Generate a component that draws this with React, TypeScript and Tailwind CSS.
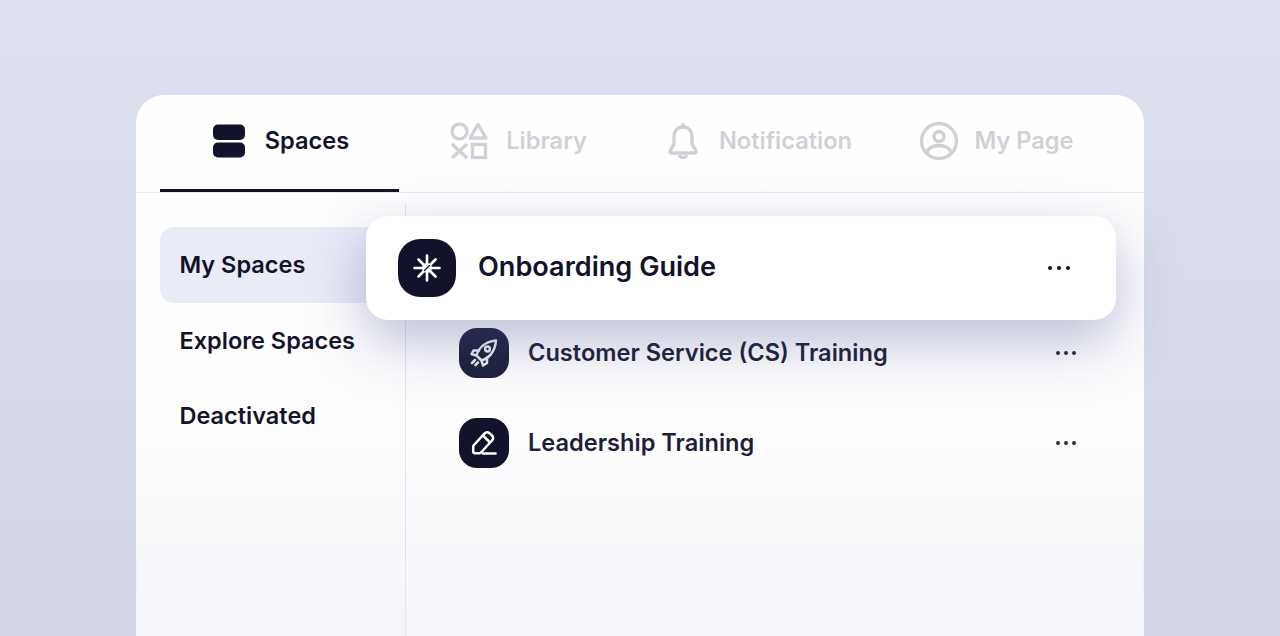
const font = { fontFamily: "Inter, 'Liberation Sans', sans-serif" };

function SpacesIcon() {
  return (
    <svg width="32" height="34" viewBox="0 0 32 34" fill="#12132b">
      <rect x="0" y="0.5" width="32" height="15.5" rx="5" />
      <rect x="0" y="18.5" width="32" height="15" rx="5" />
    </svg>
  );
}
function LibraryIcon() {
  return (
    <svg width="38" height="38" viewBox="0 0 38 38" fill="none" stroke="#d0d1d6" strokeWidth="3.4">
      <circle cx="9.5" cy="9.5" r="7.5" />
      <path d="M28 2.5 L36 16 H20 Z" strokeLinejoin="round" />
      <path d="M2 22 L17 36 M17 22 L2 36" />
      <rect x="22.5" y="22.5" width="13" height="13" />
    </svg>
  );
}
function BellIcon() {
  return (
    <svg width="30" height="36" viewBox="0 0 30 36" fill="none" stroke="#d0d1d6" strokeWidth="3.4" strokeLinejoin="round" strokeLinecap="round">
      <path d="M15 4 C8.5 4 6 9 6 14 V20 C6 24 2 25 2 28.5 C2 29.5 3 30 4 30 H26 C27 30 28 29.5 28 28.5 C28 25 24 24 24 20 V14 C24 9 21.5 4 15 4 Z" />
      <path d="M15 1.5 V4" />
      <path d="M12 33.5 C13.5 35 16.5 35 18 33.5" />
    </svg>
  );
}
function UserIcon() {
  return (
    <svg width="40" height="40" viewBox="0 0 40 40" fill="none" stroke="#d0d1d6" strokeWidth="3.4">
      <circle cx="20" cy="20" r="17.5" />
      <circle cx="20" cy="15.5" r="5" />
      <path d="M7.5 32 C9.5 26.5 14 24.5 20 24.5 C26 24.5 30.5 26.5 32.5 32" />
    </svg>
  );
}
function StarIcon() {
  return (
    <svg width="28" height="28" viewBox="0 0 28 28" fill="none" stroke="#fff" strokeWidth="2.6" strokeLinecap="round">
      <path d="M14 1.5 V26.5 M1.5 14 H26.5 M5.5 5.5 L22.5 22.5 M22.5 5.5 L5.5 22.5" />
      <circle cx="14" cy="14" r="5" fill="#fff" stroke="none" />
      <path d="M11.5 16.5 L16.5 11.5" stroke="#12132b" strokeWidth="1.3" />
    </svg>
  );
}
function RocketIcon() {
  return (
    <svg width="30" height="30" viewBox="0 0 30 30" fill="none" stroke="#eceef5" strokeWidth="2.5" strokeLinecap="round" strokeLinejoin="round">
      <path d="M10 20 L7.5 17.5 C9 12 14 4 27 2.5 C26 15 18.5 21 12.5 22.5 Z" />
      <circle cx="18.5" cy="11" r="2.4" />
      <path d="M10 12.5 L4.5 12.5 L2.5 16 L7.5 17.5" />
      <path d="M18 19.5 L18 25 L14 27.5 L12.5 22.5" />
      <path d="M6 22 L3 25 M9 24.5 L6.5 27" />
    </svg>
  );
}
function PencilIcon() {
  return (
    <svg width="26" height="26" viewBox="0 0 26 26" fill="none" stroke="#fff" strokeWidth="2.5" strokeLinecap="round" strokeLinejoin="round">
      <path d="M2.5 15.5 L13.5 3.5 C15 2 17 2 18.5 3.2 L21 5.5 C22.5 7 22.5 9 21 10.5 L10 22.5 C9.5 23 9 23.2 8.5 23.2 H4 C3 23.2 2.2 22.5 2.2 21.5 V17 C2.2 16.4 2.2 16 2.5 15.5 Z" />
      <path d="M12 5.5 L19 12.5" />
      <path d="M12 23.5 H24.5" />
    </svg>
  );
}

function Dots({ big }: { big?: boolean }) {
  return (
    <div className={big ? "flex gap-[5px]" : "flex gap-[4px]"}>
      {[0, 1, 2].map((i) => (
        <span key={i} className={big ? "w-1 h-1 rounded-full bg-[#12132b]" : "w-1 h-1 rounded-full bg-[#2a2b44]"} />
      ))}
    </div>
  );
}

function Tab({ icon, label, active, inset }: { icon: React.ReactNode; label: string; active?: boolean; inset: string }) {
  return (
    <div className={`flex items-center justify-center pb-[2px] border-b-[3px] h-full ${inset} ${active ? "border-[#12132b]" : "border-transparent"}`}>
      {icon}
      <span className={active ? "text-[23.6px] font-semibold text-[#12132b]" : "text-[23.6px] font-semibold text-[#d0d1d6]"}>{label}</span>
    </div>
  );
}

function Row({ icon, label, bg }: { icon: React.ReactNode; label: string; bg: string }) {
  return (
    <div className="h-[90px] flex items-center">
      <div className={`w-[50px] h-[50px] rounded-[18px] flex items-center justify-center ${bg}`}>{icon}</div>
      <span className="ml-[19px] text-[23.6px] font-semibold text-[#1d1e38] flex-1">{label}</span>
      <div className="mr-[68px]"><Dots /></div>
    </div>
  );
}

export default function App() {
  return (
    <div className="h-[636px] overflow-hidden bg-gradient-to-b from-[#dee1ef] to-[#d2d6e6] pt-[95px] px-[136px]" style={font}>
      <div className="relative h-[541px] rounded-t-[28px] bg-gradient-to-b from-white via-[#fdfdfe] via-65% to-[#f4f5f9] flex flex-col">
        <div className="h-[98px] border-b border-[#e9eaef] pl-[24px] pr-[28px] grid grid-cols-4 shrink-0">
          <Tab active inset="gap-[20px] pl-[3px]" icon={<SpacesIcon />} label="Spaces" />
          <Tab inset="gap-[18px]" icon={<LibraryIcon />} label="Library" />
          <Tab inset="gap-[21px] pl-[5px]" icon={<BellIcon />} label="Notification" />
          <Tab inset="gap-[15px]" icon={<UserIcon />} label="My Page" />
        </div>
        <div className="flex flex-1 pt-[10px]">
          <div className="w-[270px] border-r border-[#e4e5ec] pl-[24px] pr-[20px] pt-[24px] shrink-0">
            <div className="h-[76px] flex items-center pl-[19.5px] rounded-[14px] bg-[#e9ebf7] text-[23.5px] font-semibold text-[#12132b]">My Spaces</div>
            <div className="h-[75px] flex items-center pl-[19.5px] text-[23.5px] font-semibold text-[#12132b]">Explore Spaces</div>
            <div className="h-[75px] flex items-center pl-[19.5px] text-[23.5px] font-semibold text-[#12132b]">Deactivated</div>
          </div>
          <div className="flex-1 pl-[53px] pt-[105px]">
            <Row icon={<RocketIcon />} label="Customer Service (CS) Training" bg="bg-[#1d1f3b]" />
            <Row icon={<PencilIcon />} label="Leadership Training" bg="bg-[#12132b]" />
          </div>
        </div>
        <div className="absolute left-[230px] top-[121px] w-[750px] h-[104px] rounded-[22px] bg-white shadow-[0_20px_58px_rgba(70,80,140,0.38)] flex items-center pl-[32px] pr-[46px]">
          <div className="w-[58px] h-[58px] rounded-[22px] bg-[#12132b] flex items-center justify-center"><StarIcon /></div>
          <span className="ml-[22px] text-[27.1px] font-semibold text-[#12132b] flex-1 -translate-y-px">Onboarding Guide</span>
          <Dots big />
        </div>
      </div>
    </div>
  );
}
